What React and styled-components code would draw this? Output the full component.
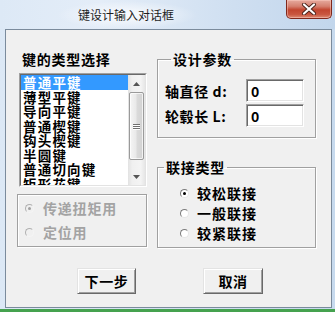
import styled, { createGlobalStyle } from "styled-components"

const Global = createGlobalStyle`
  html, body { margin: 0; padding: 0; background: #c9dbef; }
  body { font-family: "Noto Sans CJK SC", "Liberation Sans", sans-serif; }
`

const Window = styled.div`
  width: 335px;
  height: 312px;
  display: flex;
  flex-direction: column;
  overflow: hidden;
  background: linear-gradient(90deg, #dce8f5 0%, #d3e2f2 50%, #c7daee 100%);
`

const TitleBar = styled.div`
  height: 29px;
  flex-shrink: 0;
  display: flex;
  align-items: flex-start;
  background:
    radial-gradient(ellipse 70px 14px at 127px 15px, rgba(255,255,255,0.85), rgba(255,255,255,0) 100%),
    linear-gradient(90deg, #dde9f6 0%, #e4edf8 30%, #cfdff1 70%, #c2d6ec 100%);
`

const Title = styled.div`
  padding: 7px 0 0 78px;
  font-size: 12px;
  line-height: 16px;
  color: #1e1e1e;
`

const CloseButton = styled.div`
  margin-left: auto;
  margin-right: 3px;
  width: 46px;
  height: 19px;
  box-sizing: border-box;
  border: 1px solid #80281c;
  border-top: none;
  border-radius: 0 0 5px 5px;
  background: linear-gradient(180deg, #e6aa9e 0%, #d5806f 35%, #c2452f 55%, #c9563f 80%, #dc8a74 100%);
  box-shadow: inset 0 0 0 1px rgba(255, 210, 200, 0.45);
  display: flex;
  align-items: center;
  justify-content: center;
`

const Frame = styled.div`
  flex: 1;
  display: flex;
  padding: 0 3px 0 5px;
`

const Client = styled.div`
  flex: 1;
  height: 279px;
  box-sizing: border-box;
  border: 1px solid #7b8b9c;
  background: #f0f0f0;
  padding-top: 21px;
  display: flex;
  flex-direction: column;
`

const BottomEdge = styled.div`
  height: 1px;
  flex-shrink: 0;
`

const Taskbar = styled.div`
  height: 3px;
  flex-shrink: 0;
  background: #45a24f;
`

const TopRow = styled.div`
  display: flex;
  gap: 10px;
  padding-left: 11px;
`

const LeftCol = styled.div`
  width: 130px;
  display: flex;
  flex-direction: column;
`

const RightCol = styled.div`
  width: 159px;
  display: flex;
  flex-direction: column;
`

const Label = styled.div`
  font-size: 14px;
  font-weight: 700;
  line-height: 16px;
  letter-spacing: 0.75px;
  color: #000;
  white-space: nowrap;
`

const HeadLabel = styled(Label)`
  padding-left: 5px;
  margin-bottom: 6px;
`

const ListBox = styled.div`
  margin-left: 2px;
  width: 128px;
  height: 114px;
  box-sizing: border-box;
  border: 1px solid;
  border-color: #a0a0a0 #ffffff #ffffff #a0a0a0;
`

const ListInner = styled.div`
  height: 100%;
  box-sizing: border-box;
  border: 1px solid;
  border-color: #696969 #e3e3e3 #e3e3e3 #696969;
  background: #fff;
  display: flex;
  overflow: hidden;
`

const Items = styled.div`
  flex: 1;
  overflow: hidden;
`

const Item = styled.div`
  height: 14.5px;
  line-height: 14.5px;
  padding-left: 2px;
  font-size: 13.5px;
  font-weight: 700;
  letter-spacing: 1.2px;
  white-space: nowrap;
  color: ${p => (p.$selected ? "#fff" : "#000")};
  background: ${p => (p.$selected ? "#3399ff" : "transparent")};
`

const ScrollBar = styled.div`
  width: 17px;
  flex-shrink: 0;
  display: flex;
  flex-direction: column;
  background: linear-gradient(90deg, #e2e2e2 0%, #f0f0f0 25%, #f4f4f4 75%, #e6e6e6 100%);
`

const Arrow = styled.div`
  height: 17px;
  flex-shrink: 0;
  display: flex;
  align-items: center;
  justify-content: center;
`

const Thumb = styled.div`
  height: 68px;
  margin: 0 1px;
  box-sizing: border-box;
  border: 1px solid #9a9a9a;
  border-radius: 2px;
  background: linear-gradient(90deg, #f5f5f5 0%, #e9e9e9 45%, #dadada 55%, #d2d2d2 100%);
  box-shadow: inset 0 0 0 1px rgba(255,255,255,0.7);
  display: flex;
  flex-direction: column;
  align-items: center;
  justify-content: center;
  gap: 1px;
`

const Grip = styled.div`
  width: 7px;
  height: 1px;
  background: #6f6f6f;
  box-shadow: 0 1px 0 #fff;
`

const Track = styled.div`
  flex: 1;
`

const OptionBox = styled.div`
  margin-top: 7px;
  height: 53px;
  box-sizing: border-box;
  border: 1px solid #a0a0a0;
  box-shadow: inset 1px 1px #fff, 1px 1px #fff;
  padding: 1px 0 0 7px;
`

const Group = styled.fieldset`
  margin: ${p => p.$top || 0}px 0 0 0;
  min-width: 0;
  box-sizing: border-box;
  border: 1px solid #a0a0a0;
  box-shadow: inset 1px 1px #fff, 1px 1px #fff;
  padding: ${p => p.$pad};
`

const Legend = styled.legend`
  margin-left: 6px;
  padding: 0 2px;
  font-size: 14px;
  font-weight: 700;
  line-height: 16px;
  letter-spacing: 0.75px;
  color: #000;
`

const ParamRow = styled.div`
  display: flex;
  align-items: center;
  height: 23px;
  & + & { margin-top: 2px; }
`

const ParamLabel = styled(Label)`
  width: 81px;
  letter-spacing: 0.6px;
`

const TextBox = styled.div`
  width: 58px;
  height: 23px;
  box-sizing: border-box;
  border: 1px solid;
  border-color: #a0a0a0 #ffffff #ffffff #a0a0a0;
  box-shadow: inset 1px 1px #696969, inset -1px -1px #e3e3e3;
  background: #fff;
  padding: 3px 0 0 4px;
  font-size: 14px;
  font-weight: 700;
  line-height: 16px;
  color: #000;
`

const RadioRow = styled.div`
  display: flex;
  align-items: center;
  height: ${p => (p.$tall ? 24 : 20)}px;
  gap: ${p => (p.$tall ? 9 : 8)}px;
`

const RadioDot = styled.span`
  width: 9px;
  height: 9px;
  box-sizing: border-box;
  border-radius: 50%;
  border: 1px solid;
  border-color: ${p => (p.$disabled ? "#b0b0b0 #f4f4f4 #f4f4f4 #b0b0b0" : "#7a7a7a #e6e6e6 #e6e6e6 #7a7a7a")};
  background: ${p => (p.$disabled ? "#f0f0f0" : "#fff")};
  display: flex;
  align-items: center;
  justify-content: center;
  flex-shrink: 0;
  &::after {
    content: "";
    width: 3px;
    height: 3px;
    border-radius: 50%;
    background: ${p => (p.$checked ? (p.$disabled ? "#a0a0a0" : "#000") : "transparent")};
  }
`

const RadioText = styled(Label)`
  color: ${p => (p.$disabled ? "#a3a3a3" : "#000")};
  letter-spacing: ${p => (p.$disabled ? 0.8 : 1)}px;
`

const RadioList = styled.div`
  padding: 4px 0 0 22px;
`

const ButtonRow = styled.div`
  display: flex;
  gap: 67px;
  padding-left: 71px;
  margin-top: 20px;
`

const Button = styled.div`
  width: ${p => p.$w}px;
  height: 26px;
  box-sizing: border-box;
  border: 1px solid;
  border-color: #e3e3e3 #696969 #696969 #e3e3e3;
  box-shadow: inset 1px 1px #fff, inset -1px -1px #a0a0a0;
  background: #f0f0f0;
  display: flex;
  align-items: center;
  justify-content: center;
  font-size: 14px;
  font-weight: 700;
  letter-spacing: 0.6px;
  color: #000;
`

const keyTypes = ["普通平键", "薄型平键", "导向平键", "普通楔键", "钩头楔键", "半圆键", "普通切向键", "矩形花键"]

const Radio = ({ label, checked, disabled, tall }) => (
  <RadioRow $tall={tall}>
    <RadioDot $checked={checked} $disabled={disabled} />
    <RadioText $disabled={disabled}>{label}</RadioText>
  </RadioRow>
)

const App = () => {
  return (
    <Window>
      <Global />
      <TitleBar>
        <Title>键设计输入对话框</Title>
        <CloseButton>
          <svg width="16" height="12" viewBox="0 0 16 12">
            <path d="M3 1.5 L13 10.5 M13 1.5 L3 10.5" stroke="#4a231b" strokeWidth="4" strokeLinecap="round" />
            <path d="M3 1.5 L13 10.5 M13 1.5 L3 10.5" stroke="#ffffff" strokeWidth="2.2" strokeLinecap="round" />
          </svg>
        </CloseButton>
      </TitleBar>
      <Frame>
        <Client>
          <TopRow>
            <LeftCol>
              <HeadLabel>键的类型选择</HeadLabel>
              <ListBox>
                <ListInner>
                  <Items>
                    {keyTypes.map((k, i) => (
                      <Item key={k} $selected={i === 0}>{k}</Item>
                    ))}
                  </Items>
                  <ScrollBar>
                    <Arrow>
                      <svg width="7" height="4" viewBox="0 0 7 4"><path d="M0 4 L3.5 0 L7 4 Z" fill="#555" /></svg>
                    </Arrow>
                    <Thumb>
                      <Grip />
                      <Grip />
                      <Grip />
                    </Thumb>
                    <Track />
                    <Arrow>
                      <svg width="7" height="4" viewBox="0 0 7 4"><path d="M0 0 L7 0 L3.5 4 Z" fill="#555" /></svg>
                    </Arrow>
                  </ScrollBar>
                </ListInner>
              </ListBox>
              <OptionBox>
                <Radio tall disabled checked label="传递扭矩用" />
                <Radio tall disabled label="定位用" />
              </OptionBox>
            </LeftCol>
            <RightCol>
              <Group $pad="12px 0 10px 7px">
                <Legend>设计参数</Legend>
                <ParamRow>
                  <ParamLabel>轴直径 d:</ParamLabel>
                  <TextBox>0</TextBox>
                </ParamRow>
                <ParamRow>
                  <ParamLabel>轮毂长 L:</ParamLabel>
                  <TextBox>0</TextBox>
                </ParamRow>
              </Group>
              <Group $top={21} $pad="4px 0 4px 0">
                <Legend>联接类型</Legend>
                <RadioList>
                  <Radio checked label="较松联接" />
                  <Radio label="一般联接" />
                  <Radio label="较紧联接" />
                </RadioList>
              </Group>
            </RightCol>
          </TopRow>
          <ButtonRow>
            <Button $w={59}>下一步</Button>
            <Button $w={60}>取消</Button>
          </ButtonRow>
        </Client>
      </Frame>
      <BottomEdge />
      <Taskbar />
    </Window>
  )
}

export default App
